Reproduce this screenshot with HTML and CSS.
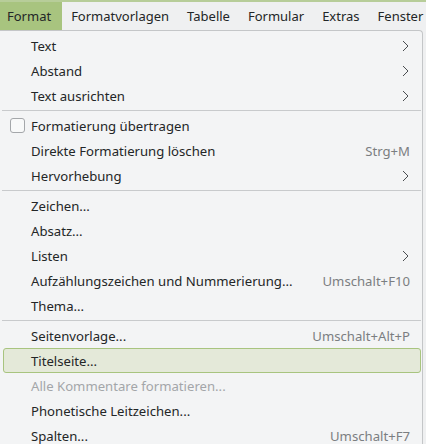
FILE: index.html
```html
<!DOCTYPE html>
<html>
<head>
<meta charset="utf-8">
<link rel="stylesheet" href="styles.css">
</head>
<body>
<div class="topline"></div>
<div class="menubar">
  <span class="mb-item active">Format</span>
  <span class="mb-item">Formatvorlagen</span>
  <span class="mb-item">Tabelle</span>
  <span class="mb-item">Formular</span>
  <span class="mb-item">Extras</span>
  <span class="mb-item">Fenster</span>
</div>
<div class="menu">
  <div class="row"><span class="label">Text</span><svg class="chev" width="7" height="12" viewBox="0 0 7 12"><polyline points="1,1 6,6 1,11" /></svg></div>
  <div class="row"><span class="label">Abstand</span><svg class="chev" width="7" height="12" viewBox="0 0 7 12"><polyline points="1,1 6,6 1,11" /></svg></div>
  <div class="row"><span class="label">Text ausrichten</span><svg class="chev" width="7" height="12" viewBox="0 0 7 12"><polyline points="1,1 6,6 1,11" /></svg></div>
  <div class="sep"></div>
  <div class="row"><span class="check"></span><span class="label">Formatierung übertragen</span></div>
  <div class="row"><span class="label">Direkte Formatierung löschen</span><span class="sc">Strg+M</span></div>
  <div class="row"><span class="label">Hervorhebung</span><svg class="chev" width="7" height="12" viewBox="0 0 7 12"><polyline points="1,1 6,6 1,11" /></svg></div>
  <div class="sep"></div>
  <div class="row"><span class="label">Zeichen...</span></div>
  <div class="row"><span class="label">Absatz...</span></div>
  <div class="row"><span class="label">Listen</span><svg class="chev" width="7" height="12" viewBox="0 0 7 12"><polyline points="1,1 6,6 1,11" /></svg></div>
  <div class="row"><span class="label">Aufzählungszeichen und Nummerierung...</span><span class="sc">Umschalt+F10</span></div>
  <div class="row"><span class="label">Thema...</span></div>
  <div class="sep"></div>
  <div class="row"><span class="label">Seitenvorlage...</span><span class="sc">Umschalt+Alt+P</span></div>
  <div class="row hl"><span class="label">Titelseite...</span></div>
  <div class="row disabled"><span class="label">Alle Kommentare formatieren...</span></div>
  <div class="row"><span class="label">Phonetische Leitzeichen...</span></div>
  <div class="row"><span class="label">Spalten...</span><span class="sc">Umschalt+F7</span></div>
</div>
</body>
</html>
```

FILE: styles.css
```css
html, body {
  margin: 0;
  padding: 0;
  background: #eff0f1;
  font-family: "Noto Sans", sans-serif;
  font-size: 13.15px;
  color: #232627;
  overflow: hidden;
}
.topline {
  height: 2px;
  background: #b7cd99;
}
.menubar {
  display: flex;
  height: 28px;
  align-items: stretch;
  background: #eff0f1;
  white-space: nowrap;
  font-size: 13px;
}
.mb-item {
  display: flex;
  align-items: center;
  padding: 0 9px;
  color: #232627;
}
.mb-item.active {
  background: #a8c47f;
  padding-left: 7px;
  padding-right: 11px;
}
.menu {
  width: 423px;
  height: 420px;
  background: #f3f4f5;
  border-top: 1px solid #c4c6c8;
  border-right: 1px solid #c4c6c8;
  border-top-right-radius: 4px;
  box-sizing: border-box;
  padding-top: 2px;
}
.row {
  display: flex;
  align-items: center;
  height: 25px;
  margin: 0 1px 0 3px;
  padding: 0 11px 0 28px;
  position: relative;
  box-sizing: border-box;
  white-space: nowrap;
}
.label {
  flex: 1;
}
.sc {
  color: #7b7e81;
}
.chev {
  margin-right: 1px;
}
.chev polyline {
  fill: none;
  stroke: #4a4d50;
  stroke-width: 1;
}
.check {
  position: absolute;
  left: 7px;
  top: 5px;
  width: 13px;
  height: 13px;
  border: 1px solid #a4a7aa;
  border-radius: 3px;
  background: #f8f9f9;
}
.sep {
  height: 1px;
  background: #c8cacc;
  margin: 2px 1px 2px 2px;
}
.hl {
  background: #e4e9d9;
  border: 1px solid #a8c47f;
  border-radius: 3px;
  padding-left: 27px;
}
.disabled {
  color: #a3a6a9;
}
```
